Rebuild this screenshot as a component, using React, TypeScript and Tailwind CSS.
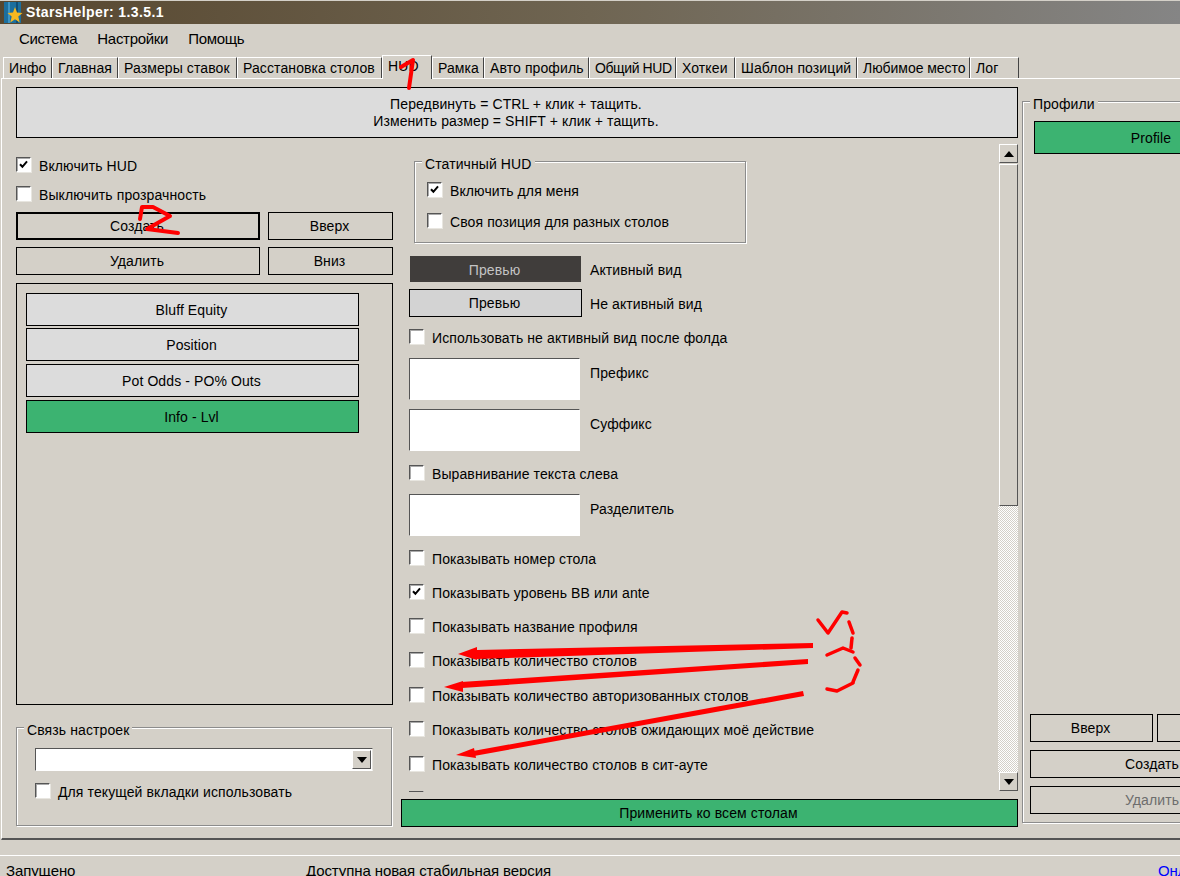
import React from 'react';

const TABS = [
    { label: 'Инфо', width: 'w-[49px]' },
    { label: 'Главная', width: 'w-[66px]' },
    { label: 'Размеры ставок', width: 'w-[119px]' },
    { label: 'Расстановка столов', width: 'w-[145px]' },
    { label: 'HUD', width: 'w-[50px]', active: true },
    { label: 'Рамка', width: 'w-[52px]' },
    { label: 'Авто профиль', width: 'w-[105px]' },
    { label: 'Общий HUD', width: 'w-[87px] tracking-[-0.4px]' },
    { label: 'Хоткеи', width: 'w-[59px]' },
    { label: 'Шаблон позиций', width: 'w-[122px]' },
    { label: 'Любимое место', width: 'w-[113px] tracking-[-0.05px]' },
    { label: 'Лог', width: 'w-[49px]' },
];

const SHOW_ROWS = [
    { label: 'Показывать номер стола', gap: 'mt-[14px]' },
    { label: 'Показывать уровень BB или ante', gap: 'mt-[19px]', checked: true },
    { label: 'Показывать название профиля', gap: 'mt-[19px]' },
    { label: 'Показывать количество столов', gap: 'mt-[19px]' },
    { label: 'Показывать количество авторизованных столов', gap: 'mt-[20px]' },
    { label: 'Показывать количество столов ожидающих моё действие', gap: 'mt-[19px]' },
    { label: 'Показывать количество столов в сит-ауте', gap: 'mt-[20px]' },
];

const Check = ({ checked }: { checked?: boolean }) => (
    <span className="w-[15px] h-[15px] shrink-0 bg-white border border-t-[#555] border-l-[#555] border-r-white border-b-white shadow-[inset_1px_1px_0_#aaa,1px_1px_0_#e8e6e0] flex items-center justify-center">
        {checked && (
            <svg width="9" height="9" viewBox="0 0 9 9">
                <path d="M1 4.2 L3.4 6.8 L8 1.4" fill="none" stroke="#000" strokeWidth="2" />
            </svg>
        )}
    </span>
);

const CheckRow = ({ label, checked, className = '' }: { label: string; checked?: boolean; className?: string }) => (
    <div className={`flex items-start gap-[8px] h-[15px] ${className}`}>
        <Check checked={checked} />
        <span className="leading-[15px] mt-[2px] whitespace-nowrap">{label}</span>
    </div>
);

const Btn = ({ children, className = '' }: { children?: React.ReactNode; className?: string }) => (
    <div className={`h-[28px] flex items-center justify-center border border-black shrink-0 pt-px pr-[2px] ${className}`}>{children}</div>
);

const Group = ({ title, className = '', children }: { title: string; className?: string; children: React.ReactNode }) => (
    <div className={`relative border border-[#8c8c8c] shadow-[inset_1px_1px_0_#fff,1px_1px_0_#fff] shrink-0 ${className}`}>
        <span className="absolute left-[7px] top-[-5px] px-[3px] bg-[#d4d0c8] leading-[15px] whitespace-nowrap">{title}</span>
        {children}
    </div>
);

const Arrow = ({ down }: { down?: boolean }) => (
    <svg width="10" height="6" viewBox="0 0 10 6">
        <polygon points={down ? '0,0 10,0 5,6' : '0,6 10,6 5,0'} fill="#000" />
    </svg>
);

const ScrollBtn = ({ down, className = '' }: { down?: boolean; className?: string }) => (
    <div className={`h-[19px] ml-px w-[19px] border border-t-white border-l-white border-r-[#555] border-b-[#555] flex items-center justify-center ${className}`}>
        <Arrow down={down} />
    </div>
);

const TextBox = ({ label, className = '' }: { label: string; className?: string }) => (
    <div className={`flex items-start gap-[10px] ml-[8px] ${className}`}>
        <div className="w-[171px] h-[42px] bg-white border border-t-[#555] border-l-[#555] border-r-white border-b-white" />
        <span className="leading-[15px] mt-[8px]">{label}</span>
    </div>
);

const Logo = () => (
    <svg width="20" height="22" viewBox="0 0 20 22" className="ml-[3px] shrink-0">
        <rect x="1" y="0" width="17" height="21" fill="#1c6f9e" />
        <rect x="5" y="0" width="2" height="21" fill="#3d94c4" />
        <rect x="13" y="0" width="2" height="21" fill="#0f4f78" />
        <polygon points="12,5 14,10.5 19.5,11 15.3,14.5 16.7,20.5 12,17.2 7.3,20.5 8.7,14.5 4.5,11 10,10.5" fill="#f5b81f" />
    </svg>
);

// hand-drawn red marks on top of the window
const Annotations = () => (
    <svg className="absolute left-0 top-0 z-20 pointer-events-none" width="1180" height="876" viewBox="0 0 1180 876">
        <g fill="none" stroke="#ff0000" strokeWidth="3.5" strokeLinecap="round" strokeLinejoin="round">
            <path d="M401 67 L413 60 L409 88" strokeWidth="4" />
            <path d="M140 219 L142 207 L153 207 L170 216 L147 229 L178 233" strokeWidth="4" />
            <path d="M818 620 L828 633 L842 612 L847 613" />
            <path d="M849 622 L853 633" />
            <path d="M852 638 L851 648" />
            <path d="M827 655 L843 648 L853 652" />
            <path d="M855 658 L860 665" />
            <path d="M858 670 L853 682" />
            <path d="M853 683 L837 691 L827 689" />
        </g>
        <g fill="#ff0000">
            <polygon points="813,643 813,648 476,659 477,650" />
            <polygon points="458,654 477,647 477,660" />
            <polygon points="808,659 808,664 462,688 461,682" />
            <polygon points="444,687 463,681 463,692" />
            <polygon points="803,691 804,696 474,756 473,751" />
            <polygon points="456,755 474,748 476,758" />
        </g>
    </svg>
);

export default function App() {
    return (
        <div className="relative w-[1180px] h-[876px] overflow-hidden bg-[#d4d0c8] text-black text-[14px] tracking-[0.1px] font-['Liberation_Sans',Arial,sans-serif] pt-px">
            <div className="h-[23px] flex items-center gap-[3px] bg-gradient-to-r from-[#57472f] via-[#6f6552] to-[#858585]">
                <Logo />
                <span className="text-white font-bold text-[14px] tracking-[0.4px]">StarsHelper: 1.3.5.1</span>
            </div>

            <div className="h-[31px] flex items-center gap-[20px] pl-[19px] text-[15px] tracking-[-0.3px]">
                <span>Система</span>
                <span>Настройки</span>
                <span>Помощь</span>
            </div>

            <div className="h-[23px] flex items-end pl-[3px]">
                {TABS.map((tab) => (
                    <div
                        key={tab.label}
                        className={`${tab.width} pl-[5px] border-l border-t border-r border-l-white border-t-white border-r-[#444] flex items-center whitespace-nowrap ${tab.active ? 'h-[24px] -mb-px pb-[3px] relative z-10 bg-[#d4d0c8]' : 'h-[21px] pt-px'}`}
                    >
                        {tab.label}
                    </div>
                ))}
            </div>

            <div className="h-[762px] ml-px border-t border-l border-t-white border-l-white border-b-2 border-b-[#555] pl-[14px] pt-[8px] flex gap-[4px]">
                <div className="w-[1002px] shrink-0 flex flex-col">
                    <div className="h-[51px] shrink-0 bg-[#dcdcdc] border border-black flex flex-col items-center justify-center leading-[17px] pr-[2px]">
                        <span>Передвинуть = CTRL + клик + тащить.</span>
                        <span>Изменить размер = SHIFT + клик + тащить.</span>
                    </div>

                    <div className="flex mt-[5px] gap-[8px]">
                        <div className="w-[377px] shrink-0 flex flex-col">
                            <CheckRow label="Включить HUD" checked className="mt-[14px]" />
                            <CheckRow label="Выключить прозрачность" className="mt-[14px]" />
                            <div className="flex gap-[8px] mt-[11px]">
                                <Btn className="w-[244px] border-2">Создать</Btn>
                                <Btn className="w-[125px]">Вверх</Btn>
                            </div>
                            <div className="flex gap-[8px] mt-[7px]">
                                <Btn className="w-[244px]">Удалить</Btn>
                                <Btn className="w-[125px]">Вниз</Btn>
                            </div>
                            <div className="h-[422px] mt-[8px] border border-black pl-[9px] pt-[9px] shrink-0">
                                <Btn className="w-[333px] h-[33px] bg-[#dcdcdc]">Bluff Equity</Btn>
                                <Btn className="w-[333px] h-[33px] mt-[2px] bg-[#dcdcdc]">Position</Btn>
                                <Btn className="w-[333px] h-[33px] mt-[3px] bg-[#dcdcdc]">Pot Odds - PO% Outs</Btn>
                                <Btn className="w-[333px] h-[33px] mt-[3px] bg-[#3cb371]">Info - Lvl</Btn>
                            </div>
                            <Group title="Связь настроек" className="w-[376px] h-[99px] mt-[22px] pl-[18px] pt-[20px]">
                                <div className="w-[338px] h-[23px] bg-white border border-t-[#555] border-l-[#555] border-r-[#e8e6e0] border-b-white flex justify-end p-px">
                                    <div className="w-[19px] h-[19px] bg-[#d4d0c8] border border-t-white border-l-white border-r-[#555] border-b-[#555] flex items-center justify-center">
                                        <Arrow down />
                                    </div>
                                </div>
                                <CheckRow label="Для текущей вкладки использовать" className="mt-[12px]" />
                            </Group>
                        </div>

                        <div className="w-[617px] shrink-0 flex flex-col">
                            <div className="h-[649px] flex overflow-hidden">
                                <div className="w-[597px] shrink-0 flex flex-col overflow-hidden">
                                    <Group title="Статичный HUD" className="w-[332px] h-[82px] mt-[18px] ml-[13px] pl-[12px] pt-[20px]">
                                        <CheckRow label="Включить для меня" checked />
                                        <CheckRow label="Своя позиция для разных столов" className="mt-[16px]" />
                                    </Group>
                                    <div className="flex items-center gap-[9px] ml-[9px] mt-[13px] shrink-0">
                                        <div className="w-[171px] h-[26px] bg-[#403d3b] text-[#c4c4c4] flex items-center justify-center pt-[2px] pr-[2px]">Превью</div>
                                        <span className="pt-[3px]">Активный вид</span>
                                    </div>
                                    <div className="flex items-center gap-[8px] ml-[8px] mt-[7px] shrink-0">
                                        <div className="w-[173px] h-[28px] bg-[#d3d3d3] border border-black flex items-center justify-center pr-[2px]">Превью</div>
                                        <span className="pt-[3px]">Не активный вид</span>
                                    </div>
                                    <CheckRow label="Использовать не активный вид после фолда" className="ml-[8px] mt-[12px] shrink-0" />
                                    <TextBox label="Префикс" className="mt-[14px] shrink-0" />
                                    <TextBox label="Суффикс" className="mt-[9px] shrink-0" />
                                    <CheckRow label="Выравнивание текста слева" className="ml-[8px] mt-[14px] shrink-0" />
                                    <TextBox label="Разделитель" className="mt-[14px] shrink-0" />
                                    {SHOW_ROWS.map((row) => (
                                        <CheckRow key={row.label} label={row.label} checked={row.checked} className={`ml-[8px] shrink-0 ${row.gap}`} />
                                    ))}
                                    <div className="ml-[8px] mt-[20px] shrink-0">
                                        <Check />
                                    </div>
                                </div>

                                <div className="w-[20px] shrink-0 flex flex-col">
                                    <ScrollBtn className="mt-px" />
                                    <div className="ml-px mt-px w-[19px] h-[342px] shrink-0 border border-t-white border-l-white border-r-[#555] border-b-[#555]" />
                                    <div className="flex-1 bg-[repeating-conic-gradient(#ffffff_0_25%,#d4d0c8_0_50%)] bg-[length:2px_2px]" />
                                    <ScrollBtn down className="mb-px" />
                                </div>
                            </div>
                            <Btn className="mt-[7px] bg-[#3cb371]">Применить ко всем столам</Btn>
                        </div>
                    </div>
                </div>

                <Group title="Профили" className="w-[260px] h-[722px] mt-[14px] flex flex-col pl-[7px] pb-[8px]">
                    <Btn className="w-[236px] h-[33px] ml-[4px] mt-[19px] bg-[#3cb371]">Profile</Btn>
                    <div className="flex gap-[4px] mt-auto">
                        <Btn className="w-[123px]">Вверх</Btn>
                        <Btn className="w-[115px]" />
                    </div>
                    <Btn className="w-[246px] mt-[8px]">Создать</Btn>
                    <Btn className="w-[246px] mt-[8px] text-[#6d6d6d]">Удалить</Btn>
                </Group>
            </div>

            <div className="mt-[15px] h-[21px] border-t border-t-white flex items-start pt-[6px] text-[15px] tracking-[-0.1px] leading-[17px] pl-[6px] whitespace-nowrap">
                <span className="w-[300px] shrink-0">Запущено</span>
                <span className="w-[852px] shrink-0">Доступна новая стабильная версия</span>
                <span className="text-[#0000ff]">Онлайн</span>
            </div>

            <Annotations />
        </div>
    );
}
